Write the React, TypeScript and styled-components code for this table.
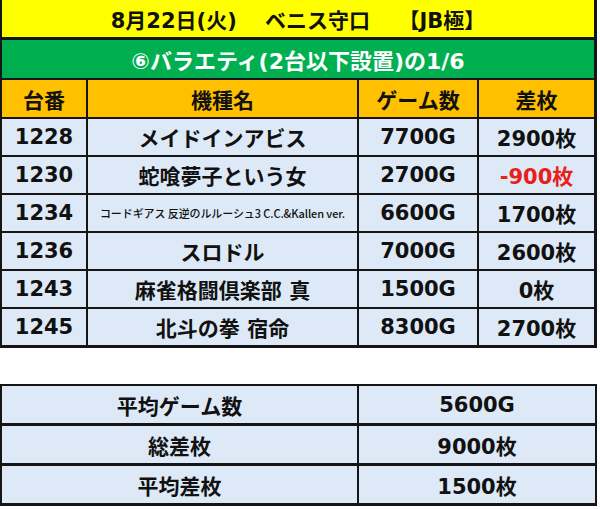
import React from 'react'
import styled, { createGlobalStyle, css } from 'styled-components'

const GlobalStyle = createGlobalStyle`
  html, body {
    margin: 0;
    padding: 0;
    background: #fff;
  }
  body {
    font-family: "DejaVu Sans", "Noto Sans CJK JP", sans-serif;
    color: #111;
  }
`

const LINE = '#151515'
const COLS = '84px 2px 269px 2px 118px 2px 115px'

const Page = styled.div`
  width: 600px;
  height: 509px;
  overflow: hidden;
`

const Sheet = styled.div`
  width: 592px;
  border-left: 2px solid ${LINE};
  border-right: 3px solid ${LINE};
  border-bottom: 3px solid ${LINE};
  display: flex;
  flex-direction: column;
`

const Banner = styled.div`
  height: ${(p: any) => p.h}px;
  display: flex;
  align-items: center;
  justify-content: center;
  font-weight: bold;
  font-size: ${(p: any) => p.size || 21}px;
  white-space: pre;
  background: ${(p: any) => p.bg};
  color: ${(p: any) => p.fg || '#111'};
  border-bottom: ${(p: any) => p.line}px solid ${LINE};
` as any

const Row = styled.div`
  display: grid;
  grid-template-columns: ${COLS};
  height: ${(p: any) => p.h || 36}px;
  background: ${(p: any) => p.bg || '#dde9f6'};
  ${(p: any) => !p.last && css`
    border-bottom: 2px solid ${LINE};
  `}
` as any

const Cell = styled.div`
  display: flex;
  align-items: center;
  justify-content: center;
  font-weight: bold;
  font-size: 21px;
  white-space: nowrap;
  color: ${(p: any) => p.red ? '#e8201c' : '#111'};
  ${(p: any) => p.small && css`
    font-size: 11px;
    font-weight: 500;
    font-family: "Noto Sans CJK JP", sans-serif;
    letter-spacing: -0.1px;
  `}
` as any

const Divider = styled.div`
  background: ${LINE};
`

const Summary = styled.div`
  margin-top: 36px;
  width: 593px;
  border: 2px solid ${LINE};
  border-bottom-width: 3px;
  display: flex;
  flex-direction: column;
`

const SummaryRow = styled.div`
  display: grid;
  grid-template-columns: 355px 2px 1fr;
  height: 37px;
  background: #dde9f6;
  ${(p: any) => !p.last && css`
    border-bottom: 3px solid ${LINE};
  `}
` as any

const machines = [
  { no: '1228', name: 'メイドインアビス', games: '7700G', diff: '2900枚' },
  { no: '1230', name: '蛇喰夢子という女', games: '2700G', diff: '-900枚', red: true },
  { no: '1234', name: 'コードギアス 反逆のルルーシュ3 C.C.&Kallen ver.', games: '6600G', diff: '1700枚', small: true },
  { no: '1236', name: 'スロドル', games: '7000G', diff: '2600枚' },
  { no: '1243', name: '麻雀格闘倶楽部 真', games: '1500G', diff: '0枚' },
  { no: '1245', name: '北斗の拳 宿命', games: '8300G', diff: '2700枚' },
]

const totals = [
  { label: '平均ゲーム数', value: '5600G' },
  { label: '総差枚', value: '9000枚' },
  { label: '平均差枚', value: '1500枚' },
]

export default function App () {
  return (
    <Page>
      <GlobalStyle />
      <Sheet>
        <Banner h={37} line={3} bg="#ffff00">{'8月22日(火)　 ベニス守口　 【JB極】'}</Banner>
        <Banner h={38} line={2} size={22} bg="#00b050" fg="#fff">⑥バラエティ(2台以下設置)の1/6</Banner>
        <Row h={37} bg="#ffc000">
          <Cell>台番</Cell>
          <Divider />
          <Cell>機種名</Cell>
          <Divider />
          <Cell>ゲーム数</Cell>
          <Divider />
          <Cell>差枚</Cell>
        </Row>
        {machines.map((m, i) => (
          <Row key={m.no} last={i === machines.length - 1}>
            <Cell>{m.no}</Cell>
            <Divider />
            <Cell small={m.small}>{m.name}</Cell>
            <Divider />
            <Cell>{m.games}</Cell>
            <Divider />
            <Cell red={m.red}>{m.diff}</Cell>
          </Row>
        ))}
      </Sheet>

      <Summary>
        {totals.map((t, i) => (
          <SummaryRow key={t.label} last={i === totals.length - 1}>
            <Cell>{t.label}</Cell>
            <Divider />
            <Cell>{t.value}</Cell>
          </SummaryRow>
        ))}
      </Summary>
    </Page>
  )
}
